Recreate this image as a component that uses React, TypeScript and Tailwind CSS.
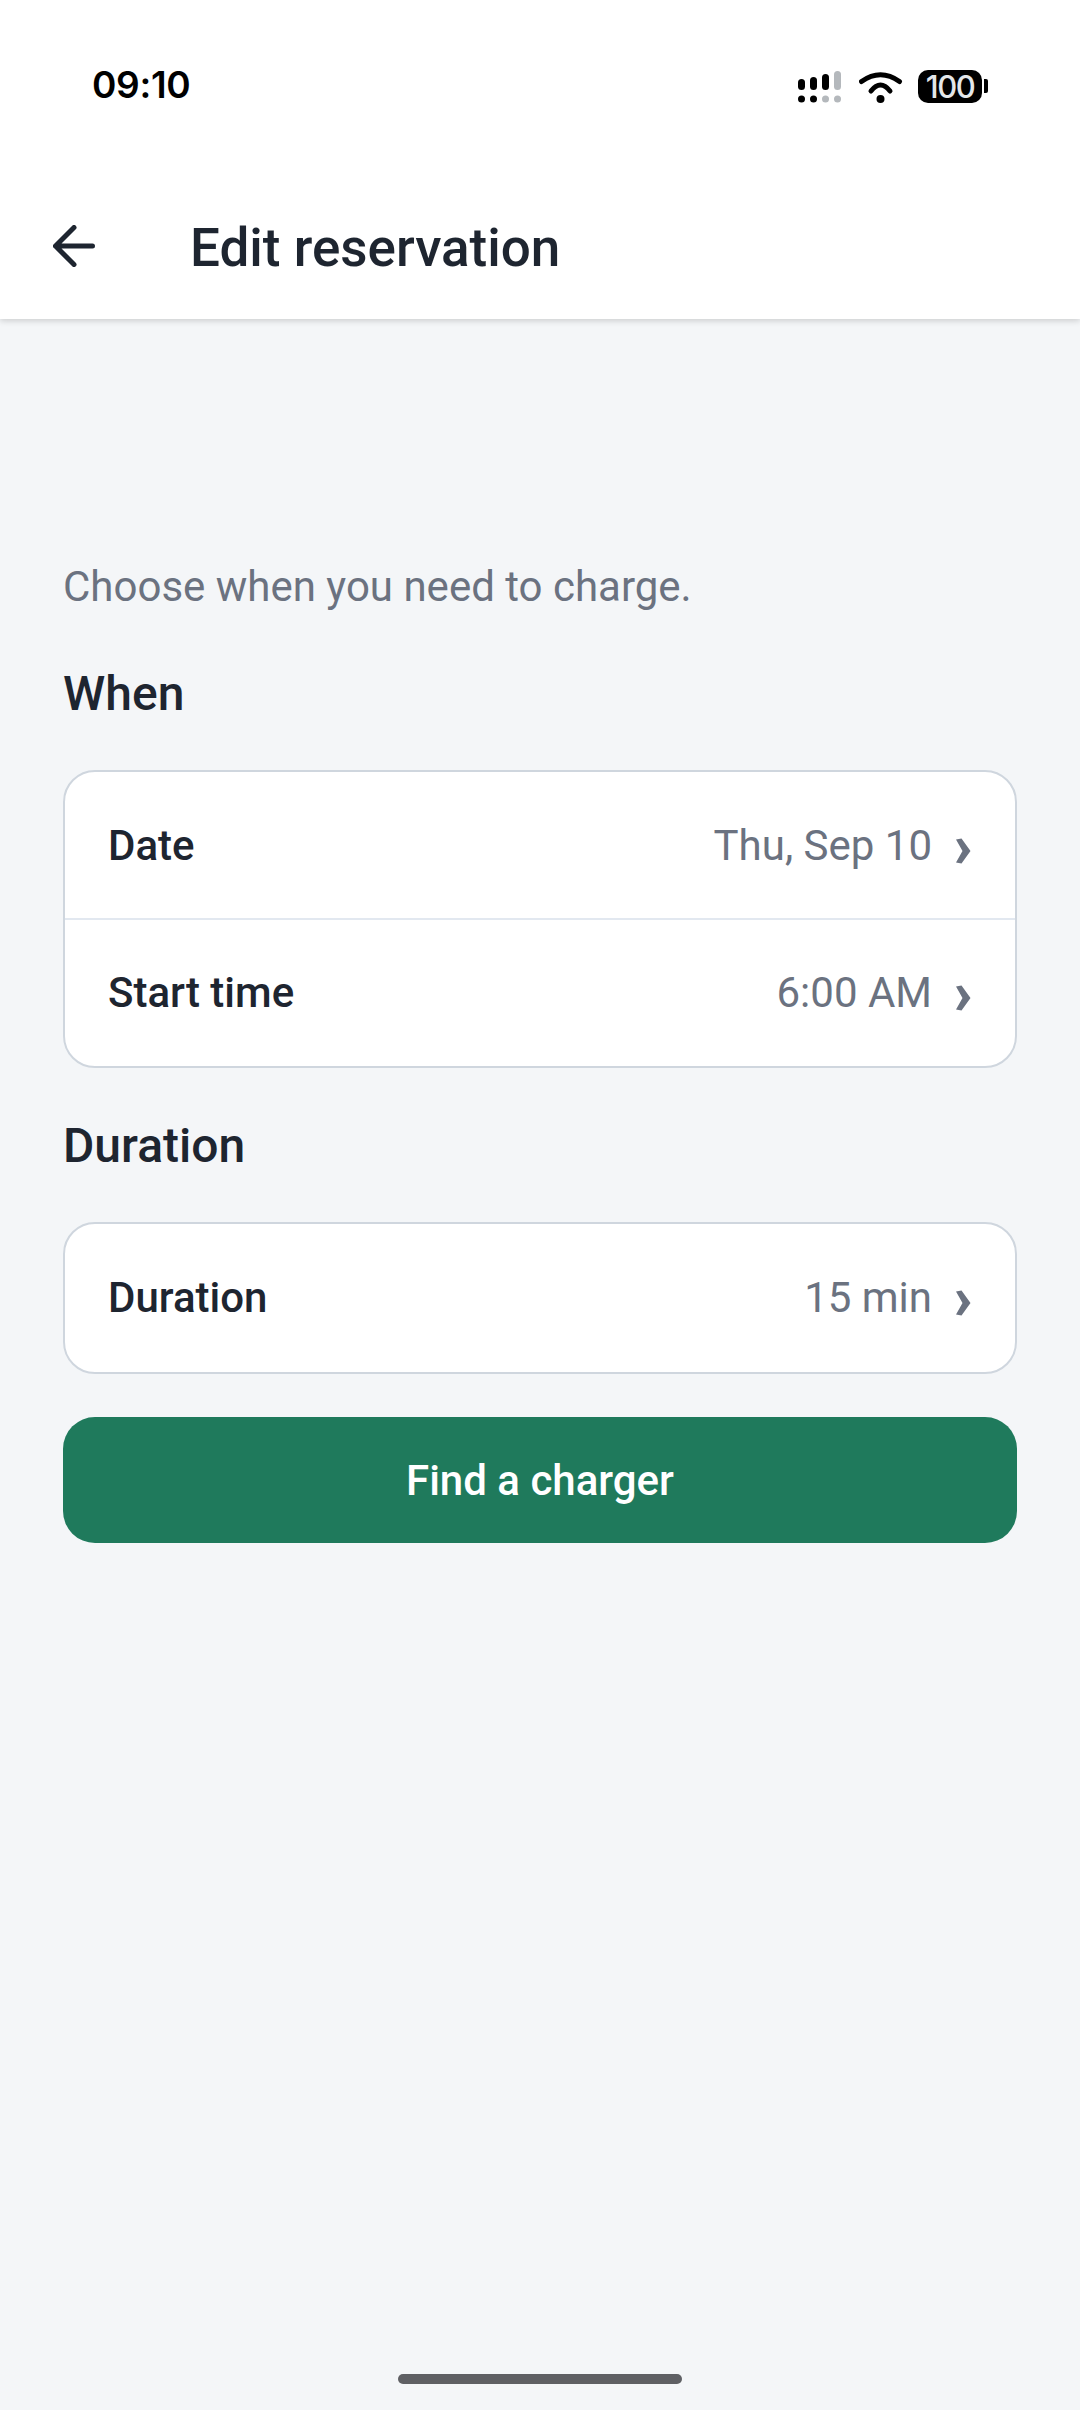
function Chevron() {
  return (
    <svg width="16" height="26" viewBox="0 0 16 26" className="ml-[23px] mt-[10px]" fill="#6b7280">
      <path d="M1 1.5 L6.5 0.5 L15.5 13 L6.5 25.5 L1 24.5 L7.5 13 Z" />
    </svg>
  );
}

function Row({ label, value, h, border }: { label: string; value: string; h: string; border?: boolean }) {
  return (
    <div className={`flex items-center justify-between pl-[43px] pr-[44px] ${h} ${border ? "border-b-2 border-[#e2e8f0]" : ""}`}>
      <span className="text-[42px] font-medium text-[#1e2530] leading-none">{label}</span>
      <div className="flex items-center">
        <span className="text-[42px] text-[#6b7280] leading-none">{value}</span>
        <Chevron />
      </div>
    </div>
  );
}

function StatusIcons() {
  return (
    <div className="flex items-end">
      <svg width="43" height="32" viewBox="0 0 43 32">
        <rect x="0" y="8" width="7" height="11" rx="3.5" fill="#000" />
        <rect x="12" y="6" width="7" height="13" rx="3.5" fill="#000" />
        <rect x="24" y="3" width="7" height="16" rx="3.5" fill="#000" />
        <rect x="36" y="0" width="7" height="19" rx="3.5" fill="#b4b8bc" />
        <circle cx="3.5" cy="28" r="3.5" fill="#000" />
        <circle cx="15.5" cy="28" r="3.5" fill="#000" />
        <circle cx="27.5" cy="28" r="3.5" fill="#b4b8bc" />
        <circle cx="39.5" cy="28" r="3.5" fill="#b4b8bc" />
      </svg>
      <svg width="44" height="32" viewBox="0 0 44 32" className="ml-[18px]" fill="none" stroke="#000" strokeLinecap="round">
        <path d="M2.5 10.5 Q21.5 -3 40.5 10.5" strokeWidth="5" />
        <path d="M12 20 Q21.5 8 31 20" strokeWidth="5" />
        <circle cx="21.5" cy="28" r="4" fill="#000" stroke="none" />
      </svg>
      <div className="ml-[15px] w-[64px] h-[33px] bg-black rounded-[10px] flex items-center justify-center text-[#e4e7ea] text-[31px] font-medium leading-none tracking-[-1.5px] font-['Inter',sans-serif]">
        100
      </div>
      <div className="ml-[2px] mb-[10px] w-[4px] h-[14px] bg-black rounded-r-[2px]" />
    </div>
  );
}

export default function App() {
  return (
    <div className="w-[1080px] h-[2410px] bg-[#f4f6f8] relative font-['Roboto',sans-serif] overflow-hidden flex flex-col">
      <header className="bg-white h-[319px] shadow-[0_2px_6px_rgba(0,0,0,0.16)] flex flex-col shrink-0">
        <div className="h-[208px] pt-[60px] pl-[92px] pr-[92px] flex items-start justify-between">
          <span className="text-[37px] font-semibold text-black leading-[50px] tracking-[-0.3px] font-['Inter',sans-serif]">09:10</span>
          <div className="mt-[10px]"><StatusIcons /></div>
        </div>
        <div className="flex items-center pl-[53px] h-[80px]">
          <svg width="42" height="42" viewBox="0 0 42 42" className="mb-[4px]" fill="none" stroke="#1e2530" strokeWidth="5" strokeLinecap="round" strokeLinejoin="round">
            <path d="M39.5 21 H2.5 M21 2.5 L2.5 21 L21 39.5" />
          </svg>
          <span className="ml-[95px] text-[53px] font-medium text-[#1e2530] leading-none">Edit reservation</span>
        </div>
      </header>
      <main className="px-[63px] pt-[244px] flex flex-col">
        <p className="text-[42px] text-[#6b7280] leading-[48px]">Choose when you need to charge.</p>
        <h2 className="mt-[59px] text-[48px] font-medium text-[#1e2530] leading-[48px]">When</h2>
        <div className="mt-[52px] bg-white border-2 border-[#cfd6de] rounded-[32px] overflow-hidden">
          <Row label="Date" value="Thu, Sep 10" h="h-[148px] pt-[2px]" border />
          <Row label="Start time" value="6:00 AM" h="h-[146px]" />
        </div>
        <h2 className="mt-[54px] text-[48px] font-medium text-[#1e2530] leading-[48px]">Duration</h2>
        <div className="mt-[52px] bg-white border-2 border-[#cfd6de] rounded-[32px] overflow-hidden">
          <Row label="Duration" value="15 min" h="h-[148px]" />
        </div>
        <button className="mt-[43px] h-[126px] bg-[#1f7a5c] rounded-[32px] text-white text-[42px] font-medium">Find a charger</button>
      </main>
      <div className="absolute bottom-[26px] left-[398px] w-[284px] h-[10px] rounded-full bg-[#5f6064]" />
    </div>
  );
}
